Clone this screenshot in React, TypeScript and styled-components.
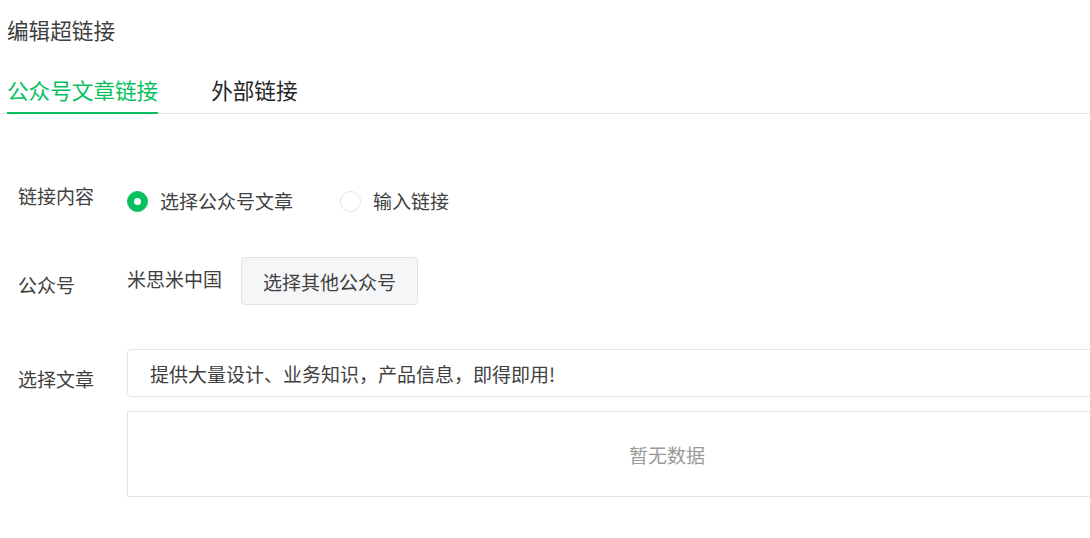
import React from "react";
import styled, { createGlobalStyle } from "styled-components";

const colors = {
  green: "#07c160",
  text: "#404040",
  muted: "#9a9a9a",
  line: "#e5e5e5",
  buttonBg: "#f5f6f8",
};

const GlobalStyle = createGlobalStyle`
  html, body {
    margin: 0;
    padding: 0;
    overflow: hidden;
    background: #fff;
  }
  body {
    font-family: "Noto Sans CJK SC", "Noto Sans", sans-serif;
    color: ${colors.text};
  }
`;

const Page = styled.div`
  width: 1090px;
  height: 538px;
  overflow: hidden;
`;

const Title = styled.h1`
  margin: 15px 0 0 7px;
  font-size: 21.6px;
  font-weight: 400;
  line-height: 30px;
  color: ${colors.text};
`;

const TabBar = styled.div`
  display: flex;
  gap: 53px;
  margin-top: 30px;
  padding-left: 7px;
  border-bottom: 1px solid ${colors.line};
`;

const Tab = styled.div<{ $active?: boolean }>`
  font-size: 21.6px;
  line-height: 30px;
  padding-bottom: 7px;
  margin-bottom: -1px;
  border-bottom: 2px solid ${(p) => (p.$active ? colors.green : "transparent")};
  color: ${(p) => (p.$active ? colors.green : "#262626")};
  white-space: nowrap;
`;

const Form = styled.div`
  display: flex;
  flex-direction: column;
  margin-top: 67px;
  padding-left: 18px;
`;

const Row = styled.div<{ $gap?: number }>`
  display: flex;
  align-items: flex-start;
  margin-top: ${(p) => p.$gap ?? 0}px;
`;

const Label = styled.div<{ $pad?: number }>`
  width: 109px;
  flex-shrink: 0;
  font-size: 19px;
  line-height: 30px;
  padding-top: ${(p) => p.$pad ?? 0}px;
  color: ${colors.text};
`;

const Controls = styled.div<{ $height?: number }>`
  display: flex;
  align-items: center;
  height: ${(p) => p.$height ?? 40}px;
`;

const RadioItem = styled.label`
  display: flex;
  align-items: center;
  gap: 12px;
  font-size: 19px;
  line-height: 30px;
  margin-right: 47px;
  white-space: nowrap;
`;

const RadioDot = styled.span<{ $checked?: boolean }>`
  width: 21px;
  height: 21px;
  box-sizing: border-box;
  border-radius: 50%;
  display: flex;
  align-items: center;
  justify-content: center;
  background: ${(p) => (p.$checked ? colors.green : "#fff")};
  border: 1px solid ${(p) => (p.$checked ? colors.green : "#e2e2e2")};

  &::after {
    content: "";
    display: ${(p) => (p.$checked ? "block" : "none")};
    width: 7px;
    height: 7px;
    border-radius: 50%;
    background: #fff;
  }
`;

const Account = styled.span`
  font-size: 19px;
  line-height: 30px;
  padding-bottom: 4px;
  margin-right: 19px;
  white-space: nowrap;
`;

const Button = styled.button`
  height: 48px;
  padding: 0 21px;
  box-sizing: border-box;
  border: 1px solid #e2e3e6;
  border-radius: 4px;
  background: ${colors.buttonBg};
  font-family: inherit;
  font-size: 19px;
  color: ${colors.text};
  white-space: nowrap;
`;

const ArticleColumn = styled.div`
  display: flex;
  flex-direction: column;
  gap: 14px;
`;

const Input = styled.div`
  width: 1080px;
  height: 48px;
  box-sizing: border-box;
  border: 1px solid ${colors.line};
  border-radius: 4px;
  padding-left: 22px;
  display: flex;
  align-items: center;
  font-size: 19px;
  color: ${colors.text};
  white-space: nowrap;
`;

const EmptyBox = styled.div`
  width: 1080px;
  height: 86px;
  box-sizing: border-box;
  border: 1px solid ${colors.line};
  display: flex;
  align-items: center;
  justify-content: center;
  font-size: 19px;
  color: ${colors.muted};
`;

export default function App() {
  return (
    <Page>
      <GlobalStyle />
      <Title>编辑超链接</Title>
      <TabBar>
        <Tab $active>公众号文章链接</Tab>
        <Tab>外部链接</Tab>
      </TabBar>
      <Form>
        <Row>
          <Label>链接内容</Label>
          <Controls>
            <RadioItem>
              <RadioDot $checked />
              选择公众号文章
            </RadioItem>
            <RadioItem>
              <RadioDot />
              输入链接
            </RadioItem>
          </Controls>
        </Row>
        <Row $gap={36}>
          <Label $pad={13}>公众号</Label>
          <Controls $height={48}>
            <Account>米思米中国</Account>
            <Button>选择其他公众号</Button>
          </Controls>
        </Row>
        <Row $gap={44}>
          <Label $pad={15}>选择文章</Label>
          <ArticleColumn>
            <Input>提供大量设计、业务知识，产品信息，即得即用!</Input>
            <EmptyBox>暂无数据</EmptyBox>
          </ArticleColumn>
        </Row>
      </Form>
    </Page>
  );
}
